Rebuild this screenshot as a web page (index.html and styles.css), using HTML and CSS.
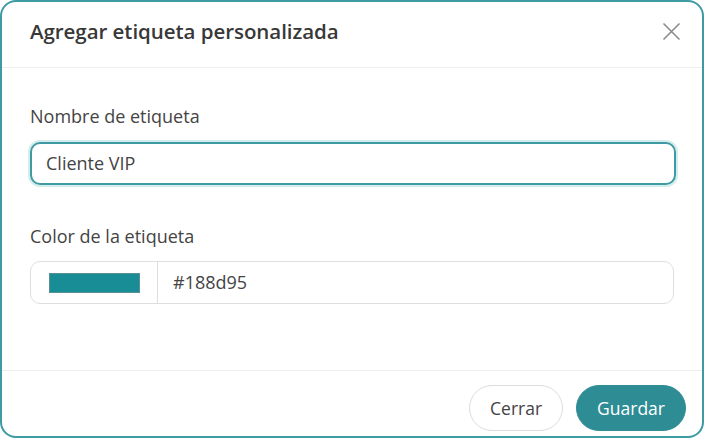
FILE: index.html
```html
<!DOCTYPE html>
<html lang="es">
<head>
<meta charset="utf-8">
<link rel="stylesheet" href="styles.css">
</head>
<body>
<div class="dialog">
  <div class="header">
    <h1 class="title">Agregar etiqueta personalizada</h1>
    <button class="close" aria-label="Cerrar">
      <svg width="19" height="19" viewBox="0 0 19 19"><path d="M1.5 1.5L17.5 17.5M17.5 1.5L1.5 17.5" stroke="#8a8a8a" stroke-width="1.6" fill="none"/></svg>
    </button>
  </div>
  <div class="body">
    <label class="label">Nombre de etiqueta</label>
    <div class="input focused">Cliente VIP</div>
    <label class="label second">Color de la etiqueta</label>
    <div class="color-group">
      <div class="swatch-cell"><span class="swatch"></span></div>
      <div class="hex">#188d95</div>
    </div>
  </div>
  <div class="footer">
    <button class="btn btn-secondary">Cerrar</button>
    <button class="btn btn-primary">Guardar</button>
  </div>
</div>
</body>
</html>
```
FILE: styles.css
```css
* { box-sizing: border-box; }
html, body { margin: 0; padding: 0; background: #fff; }
body { font-family: "Open Sans", "Noto Sans", sans-serif; color: #3d3d3d; }
.dialog {
  width: 704px;
  height: 438px;
  border: 2px solid #3e9ba2;
  border-radius: 16px;
  display: flex;
  flex-direction: column;
  background: #fff;
  overflow: hidden;
}
.header {
  height: 66px;
  border-bottom: 1px solid #eeeeee;
  display: flex;
  align-items: center;
  justify-content: space-between;
  padding: 0 21px 7px 28px;
  flex: none;
}
.title {
  margin: 0;
  font-size: 20.5px;
  font-weight: 600;
  color: #383838;
  letter-spacing: -0.05px;
}
.close {
  border: 0;
  background: none;
  padding: 0;
  width: 19px;
  height: 19px;
  display: flex;
}
.body {
  flex: 1;
  padding: 36px 26px 0 28px;
  display: flex;
  flex-direction: column;
}
.label {
  font-size: 18px;
  color: #444;
  line-height: 24px;
  display: block;
}
.second { margin-top: 39px; }
.input {
  margin-top: 14px;
  height: 43px;
  border: 2px solid #3f9ba1;
  border-radius: 10px;
  box-shadow: 0 0 0 2px #d3ecec;
  padding: 0 14px;
  font-size: 18px;
  line-height: 39px;
  color: #444;
}
.color-group {
  margin-top: 13px;
  height: 43px;
  border: 1px solid #dedede;
  border-radius: 10px;
  display: flex;
  margin-right: 2px;
}
.swatch-cell {
  width: 127px;
  border-right: 1px solid #dedede;
  display: flex;
  align-items: center;
  padding-left: 18px;
}
.swatch {
  width: 91px;
  height: 20px;
  background: #188d95;
  border: 1px solid #5b8f93;
}
.hex {
  padding-left: 15px;
  font-size: 18px;
  line-height: 41px;
  color: #444;
}
.footer {
  height: 66px;
  border-top: 1px solid #eeeeee;
  display: flex;
  justify-content: flex-end;
  align-items: flex-start;
  gap: 13px;
  padding: 14px 16px 0 0;
  flex: none;
}
.btn {
  height: 46px;
  border-radius: 23px;
  font-family: "Open Sans", "Noto Sans", sans-serif;
  font-size: 17.5px;
  padding: 0 20px;
}
.btn-secondary {
  background: #fff;
  border: 1px solid #dcdcdc;
  color: #444;
}
.btn-primary {
  background: #2e8c95;
  border: 1px solid #2e8c95;
  color: #fff;
  font-weight: 500;
}
```
